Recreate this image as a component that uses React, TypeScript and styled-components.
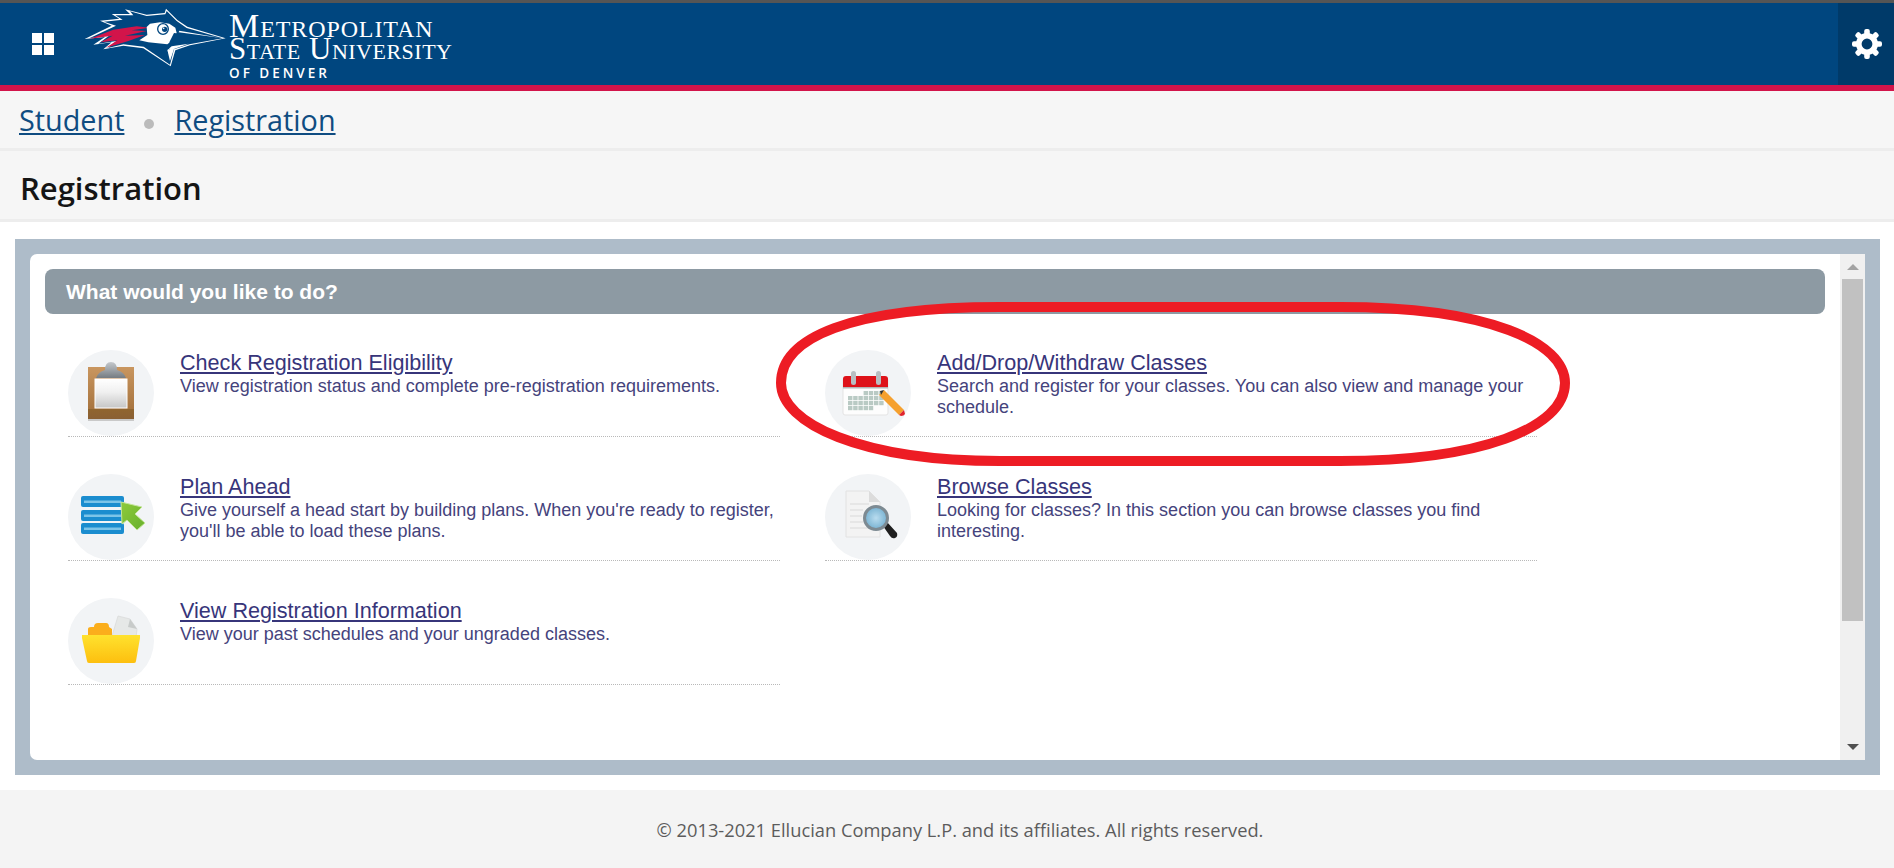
import React from "react";
import styled, { createGlobalStyle } from "styled-components";

const Global = createGlobalStyle`
  html, body { margin: 0; padding: 0; background: #fff; overflow: hidden; }
  * { box-sizing: border-box; }
`;

const Page = styled.div`
  position: relative;
  width: 1894px;
  height: 868px;
  overflow: hidden;
  display: flex;
  flex-direction: column;
  border-top: 3px solid #555;
`;

const Header = styled.header`
  height: 88px;
  flex: none;
  background: #00467f;
  border-bottom: 6px solid #d2144a;
  display: flex;
  align-items: stretch;
`;

const MenuButton = styled.div`
  width: 32px;
  height: 22px;
  margin: 30px 0 0 32px;
  flex: none;
  display: grid;
  grid-template-columns: repeat(2, 9.5px);
  grid-auto-rows: 9.5px;
  gap: 2.5px;
`;

const MenuDot = styled.span`
  background: #fff;
`;

const Logo = styled.div`
  display: flex;
  margin-left: 16px;
  flex: none;
`;

const Bird = styled.svg`
  width: 150px;
  height: 65px;
  margin-top: 2px;
  flex: none;
`;

const Wordmark = styled.div`
  margin-left: -1px;
  color: #fff;
  display: flex;
  flex-direction: column;
  padding-top: 11px;
`;

const WordLine = styled.div<{ $size: number; $spacing: number }>`
  font-family: "Liberation Serif", serif;
  font-variant: small-caps;
  font-size: ${(p) => p.$size}px;
  line-height: 23px;
  letter-spacing: ${(p) => p.$spacing}px;
  white-space: nowrap;
`;

const SubLine = styled.div`
  font-family: "Open Sans", sans-serif;
  font-weight: 600;
  font-size: 13.5px;
  line-height: 14px;
  letter-spacing: 3px;
  margin-top: 6px;
  white-space: nowrap;
`;

const SettingsButton = styled.div`
  margin-left: auto;
  width: 56px;
  background: #003a69;
  display: flex;
  align-items: center;
  justify-content: center;
  padding: 0 0 0 2px;
`;

const Breadcrumb = styled.nav`
  height: 60px;
  flex: none;
  background: #f6f6f6;
  border-bottom: 3px solid #ededed;
  display: flex;
  align-items: center;
  padding: 0 0 0 19px;
  font-family: "Open Sans", sans-serif;
  font-size: 28.8px;
`;

const Crumb = styled.a`
  color: #0f4c81;
  text-decoration: underline;
`;

const CrumbDot = styled.span`
  width: 10px;
  height: 10px;
  margin: 8px 20px 0 20px;
  border-radius: 50%;
  background: #bbb;
`;

const TitleBar = styled.div`
  height: 71px;
  flex: none;
  background: #f6f6f6;
  border-bottom: 3px solid #ededed;
  display: flex;
  align-items: center;
  padding: 5px 0 0 20px;
`;

const Title = styled.h1`
  margin: 0;
  font-family: "Open Sans", sans-serif;
  font-weight: 600;
  font-size: 31px;
  color: #151515;
`;

const Main = styled.main`
  flex: none;
  height: 568px;
  padding: 17px 14px 15px 15px;
  background: #fff;
`;

const Frame = styled.div`
  height: 100%;
  padding: 15px;
  background: #aebcc9;
`;

const Inner = styled.div`
  height: 100%;
  background: #fff;
  border-radius: 7px 0 0 7px;
  display: flex;
  overflow: hidden;
`;

const Content = styled.div`
  flex: 1;
  padding: 15px 15px 0 15px;
`;

const SectionHead = styled.div`
  height: 45px;
  background: #8d9aa3;
  border-radius: 8px;
  display: flex;
  align-items: center;
  padding: 0 0 0 21px;
  font-family: "Liberation Sans", sans-serif;
  font-weight: 700;
  font-size: 21px;
  color: #fff;
`;

const Grid = styled.div`
  display: grid;
  grid-template-columns: 712px 712px;
  column-gap: 45px;
  row-gap: 37px;
  padding: 36px 0 0 23px;
  align-content: start;
`;

const Card = styled.div`
  height: 87px;
  display: flex;
  border-bottom: 1px dotted #b9b9b9;
`;

const IconCircle = styled.div`
  width: 86px;
  height: 86px;
  flex: none;
  border-radius: 50%;
  background: #f2f4f6;
`;

const Glyph = styled.svg`
  display: block;
  width: 86px;
  height: 86px;
  filter: blur(0.35px);
`;

const CardText = styled.div`
  margin-left: 26px;
  width: 600px;
  font-family: "Liberation Sans", sans-serif;
  color: #45437c;
`;

const CardLink = styled.a`
  display: block;
  width: fit-content;
  font-size: 21.6px;
  line-height: 26px;
  color: #37357a;
  text-decoration: underline;
`;

const CardDesc = styled.p`
  margin: 0;
  font-size: 18px;
  line-height: 21px;
`;

const Scrollbar = styled.div`
  width: 25px;
  flex: none;
  background: #f0f0f0;
  display: flex;
  flex-direction: column;
  align-items: center;
`;

const ArrowUp = styled.div`
  width: 0;
  height: 0;
  margin-top: 10px;
  border-left: 6px solid transparent;
  border-right: 6px solid transparent;
  border-bottom: 6px solid #a3a3a3;
`;

const Thumb = styled.div`
  width: 21px;
  height: 342px;
  margin-top: 9px;
  background: #c1c1c1;
`;

const ArrowDown = styled.div`
  width: 0;
  height: 0;
  margin-top: auto;
  margin-bottom: 10px;
  border-left: 6px solid transparent;
  border-right: 6px solid transparent;
  border-top: 6px solid #505050;
`;

const Footer = styled.footer`
  flex: 1;
  background: #f4f4f4;
  display: flex;
  align-items: center;
  justify-content: center;
  padding: 0 0 0 26px;
  font-family: "Open Sans", sans-serif;
  font-size: 18.3px;
  color: #5c5c5c;
`;

const Annotation = styled.svg`
  position: absolute;
  left: 770px;
  top: 292px;
  width: 810px;
  height: 175px;
  pointer-events: none;
`;

const BirdLogo = () => (
  <Bird viewBox="0 0 450 195">
    <path
      fill="#fff"
      d="M437 100 L322 65 L292 45 L258 11 L254 24 L200 29 L135 13 L150 27 L95 27 L118 41 L60 47 L95 62 L14 102 L75 96 L40 119 L95 112 L70 133 L130 122 L190 130 L272 184 L286 136 L330 121 Z"
    />
    <path
      fill="#00467f"
      d="M428 100 L320 69 L290 48 L260 18 L256 28 L200 33 L150 19 L160 31 L106 31 L128 44 L72 50 L108 62 L28 100 L90 90 L55 116 L110 108 L84 129 L130 118 L191 125 L270 179 L282 133 L328 118 Z"
    />
    <path
      fill="#d2144a"
      d="M30 101 L100 74 L170 64 L208 68 L155 76 L200 78 L135 92 L195 90 L145 108 L78 128 L112 106 L62 112 L98 92 Z"
    />
    <path
      fill="#fff"
      d="M200 66 L210 56 L240 52 L268 56 L286 68 L290 84 L278 106 L262 118 L205 112 L178 106 L202 90 Z"
    />
    <path fill="#00467f" d="M282 84 L420 100 L340 112 L276 126 L268 112 Z" />
    <path fill="#fff" d="M298 77 L424 99 L296 82 Z" />
    <path fill="#fff" d="M275 124 L326 116 L282 132 L270 168 L262 135 Z" />
    <path fill="none" stroke="#00467f" strokeWidth="3" d="M205 122 L262 160 M225 119 L264 144 M245 122 L268 132" />
    <circle cx="249" cy="72" r="16" fill="#fff" stroke="#00467f" strokeWidth="4" />
    <circle cx="254" cy="73" r="8" fill="#00467f" />
    <circle cx="251" cy="70" r="2.5" fill="#fff" />
  </Bird>
);

const Gear = () => (
  <svg width="30" height="30" viewBox="0 0 30 30">
    <g fill="#fff">
      {[0, 45, 90, 135, 180, 225, 270, 315].map((a) => (
        <rect key={a} x="12.2" y="0" width="5.6" height="8" rx="2" transform={`rotate(${a} 15 15)`} />
      ))}
    </g>
    <circle cx="15" cy="15" r="8.2" fill="none" stroke="#fff" strokeWidth="5.6" />
  </svg>
);

const ClipboardIcon = () => (
  <Glyph viewBox="0 0 86 86">
    <defs>
      <linearGradient id="cbPaper" x1="0" y1="0" x2="0" y2="1">
        <stop offset="0" stopColor="#fff" />
        <stop offset="0.45" stopColor="#f0f0f0" />
        <stop offset="1" stopColor="#c6c6c6" />
      </linearGradient>
      <linearGradient id="cbBoard" x1="0" y1="0" x2="0" y2="1">
        <stop offset="0" stopColor="#c9965f" />
        <stop offset="0.8" stopColor="#a87540" />
        <stop offset="0.81" stopColor="#90652f" />
        <stop offset="1" stopColor="#8a6034" />
      </linearGradient>
      <linearGradient id="cbClip" x1="0" y1="0" x2="0" y2="1">
        <stop offset="0" stopColor="#c4c8cc" />
        <stop offset="1" stopColor="#757c82" />
      </linearGradient>
    </defs>
    <rect x="20" y="17" width="46" height="52" fill="url(#cbBoard)" />
    <rect x="20" y="69" width="46" height="2" fill="#c9c9c9" />
    <rect x="27" y="29" width="32" height="29" fill="url(#cbPaper)" stroke="#fff" strokeWidth="1" />
    <path d="M28 28 Q30 22 37 20 Q37 12 43 12 Q49 12 49 20 Q56 22 58 28 Z" fill="url(#cbClip)" />
  </Glyph>
);

const PlanIcon = () => (
  <Glyph viewBox="0 0 86 86">
    <defs>
      <linearGradient id="plArrow" x1="0" y1="0" x2="1" y2="1">
        <stop offset="0" stopColor="#8fcb3c" />
        <stop offset="1" stopColor="#67b02c" />
      </linearGradient>
    </defs>
    {[22, 36, 49].map((y) => (
      <g key={y}>
        <rect x="13" y={y} width="43" height="11" rx="2" fill="#1b8dcf" />
        <rect x="16" y={y + 4.5} width="37" height="2.5" fill="#7cc4e8" />
      </g>
    ))}
    <path d="M53 28 L74 33 L67 40 L77 49 L69 56 L59 46 L54 50 Z" fill="url(#plArrow)" stroke="#c5e59b" strokeWidth="1" />
  </Glyph>
);

const FolderIcon = () => (
  <Glyph viewBox="0 0 86 86">
    <defs>
      <linearGradient id="foFront" x1="0" y1="0" x2="0" y2="1">
        <stop offset="0" stopColor="#ffe22e" />
        <stop offset="1" stopColor="#fdbf0f" />
      </linearGradient>
    </defs>
    <path d="M20 40 V31 Q20 29 23 29 L26 29 Q26 25 30 25 H38 Q41 25 41 29 L44 31 V40 Z" fill="#fbae1c" />
    <path d="M44 38 L50 18 L62 21 L69 31 L68 40 Z" fill="#e6e8e7" stroke="#d9dbda" strokeWidth="0.8" />
    <path d="M62 21 L60 29 L69 31 Z" fill="#c8cbca" />
    <path d="M14 37 H72 V40 L68 63 Q68 65 66 65 H21 Q19 65 19 63 L14 40 Z" fill="url(#foFront)" />
  </Glyph>
);

const CalendarIcon = () => {
  const cells: { x: number; y: number }[] = [];
  for (let r = 0; r < 4; r++) {
    for (let c = 0; c < 7; c++) {
      if (r === 0 && c < 3) continue;
      if (r === 3 && c > 4) continue;
      cells.push({ x: 23 + c * 5.2, y: 41 + r * 5 });
    }
  }
  return (
    <Glyph viewBox="0 0 86 86">
      <rect x="18" y="28" width="45" height="37" rx="2" fill="#fdfdfd" stroke="#e3e3e3" />
      <path d="M18 37 V29 Q18 26 21 26 H60 Q63 26 63 29 V37 Z" fill="#de1219" />
      <rect x="18" y="37" width="45" height="1.5" fill="#b5b5b5" />
      <rect x="26" y="21" width="5" height="14" rx="2.5" fill="#b8bec2" />
      <rect x="51" y="21" width="5" height="14" rx="2.5" fill="#b8bec2" />
      {cells.map((c) => (
        <rect key={`${c.x}-${c.y}`} x={c.x} y={c.y} width="4.4" height="4.2" fill="#b9cac4" />
      ))}
      <path d="M54 45 L59 40 L79 60 L74 65 Z" fill="#f5a02e" />
      <path d="M55 41 L59 40 L56 45 Z" fill="#333" />
      <path d="M74 65 L79 60 L80 64 Q79 66 76 66 Z" fill="#e0242c" />
    </Glyph>
  );
};

const BrowseIcon = () => (
  <Glyph viewBox="0 0 86 86">
    <defs>
      <radialGradient id="brLens" cx="0.5" cy="0.5" r="0.6">
        <stop offset="0" stopColor="#b9dcef" />
        <stop offset="1" stopColor="#6aa9cb" />
      </radialGradient>
    </defs>
    <path d="M21 17 H44 L55 28 V63 H21 Z" fill="#f3f3f3" stroke="#e2e2e2" />
    <path d="M44 17 L55 28 H44 Z" fill="#dcdcdc" />
    <path stroke="#d9d9d9" strokeWidth="1" d="M25 30 H44 M25 36 H38 M25 42 H37 M25 48 H38 M25 54 H48" />
    <path d="M58 52 L62 48 L72 59 Q73 63 70 64 Q67 65 65 62 Z" fill="#1f1f1f" />
    <circle cx="51" cy="44" r="11.5" fill="url(#brLens)" stroke="#7d8a92" strokeWidth="3" />
  </Glyph>
);

const items = [
  {
    icon: <ClipboardIcon />,
    title: "Check Registration Eligibility",
    desc: "View registration status and complete pre-registration requirements.",
  },
  {
    icon: <CalendarIcon />,
    title: "Add/Drop/Withdraw Classes",
    desc: "Search and register for your classes. You can also view and manage your schedule.",
  },
  {
    icon: <PlanIcon />,
    title: "Plan Ahead",
    desc: "Give yourself a head start by building plans. When you're ready to register, you'll be able to load these plans.",
  },
  {
    icon: <BrowseIcon />,
    title: "Browse Classes",
    desc: "Looking for classes? In this section you can browse classes you find interesting.",
  },
  {
    icon: <FolderIcon />,
    title: "View Registration Information",
    desc: "View your past schedules and your ungraded classes.",
  },
];

export default function App() {
  return (
    <>
      <Global />
      <Page>
        <Header>
          <MenuButton>
            <MenuDot />
            <MenuDot />
            <MenuDot />
            <MenuDot />
          </MenuButton>
          <Logo>
            <BirdLogo />
            <Wordmark>
              <WordLine $size={34} $spacing={0.9}>Metropolitan</WordLine>
              <WordLine $size={31} $spacing={0.5}>State University</WordLine>
              <SubLine>OF DENVER</SubLine>
            </Wordmark>
          </Logo>
          <SettingsButton>
            <Gear />
          </SettingsButton>
        </Header>
        <Breadcrumb>
          <Crumb>Student</Crumb>
          <CrumbDot />
          <Crumb>Registration</Crumb>
        </Breadcrumb>
        <TitleBar>
          <Title>Registration</Title>
        </TitleBar>
        <Main>
          <Frame>
            <Inner>
              <Content>
                <SectionHead>What would you like to do?</SectionHead>
                <Grid>
                  {items.map((it) => (
                    <Card key={it.title}>
                      <IconCircle>{it.icon}</IconCircle>
                      <CardText>
                        <CardLink>{it.title}</CardLink>
                        <CardDesc>{it.desc}</CardDesc>
                      </CardText>
                    </Card>
                  ))}
                </Grid>
              </Content>
              <Scrollbar>
                <ArrowUp />
                <Thumb />
                <ArrowDown />
              </Scrollbar>
            </Inner>
          </Frame>
        </Main>
        <Footer>© 2013-2021 Ellucian Company L.P. and its affiliates. All rights reserved.</Footer>
        <Annotation viewBox="770 292 810 175">
          <path
            fill="none"
            stroke="#ed1c24"
            strokeWidth="10"
            d="M781 380 C781 335 850 304 1000 304 L1340 304 C1490 304 1565 340 1565 380 C1565 425 1480 458 1340 458 L1000 458 C860 458 781 420 781 380 Z"
          />
        </Annotation>
      </Page>
    </>
  );
}
